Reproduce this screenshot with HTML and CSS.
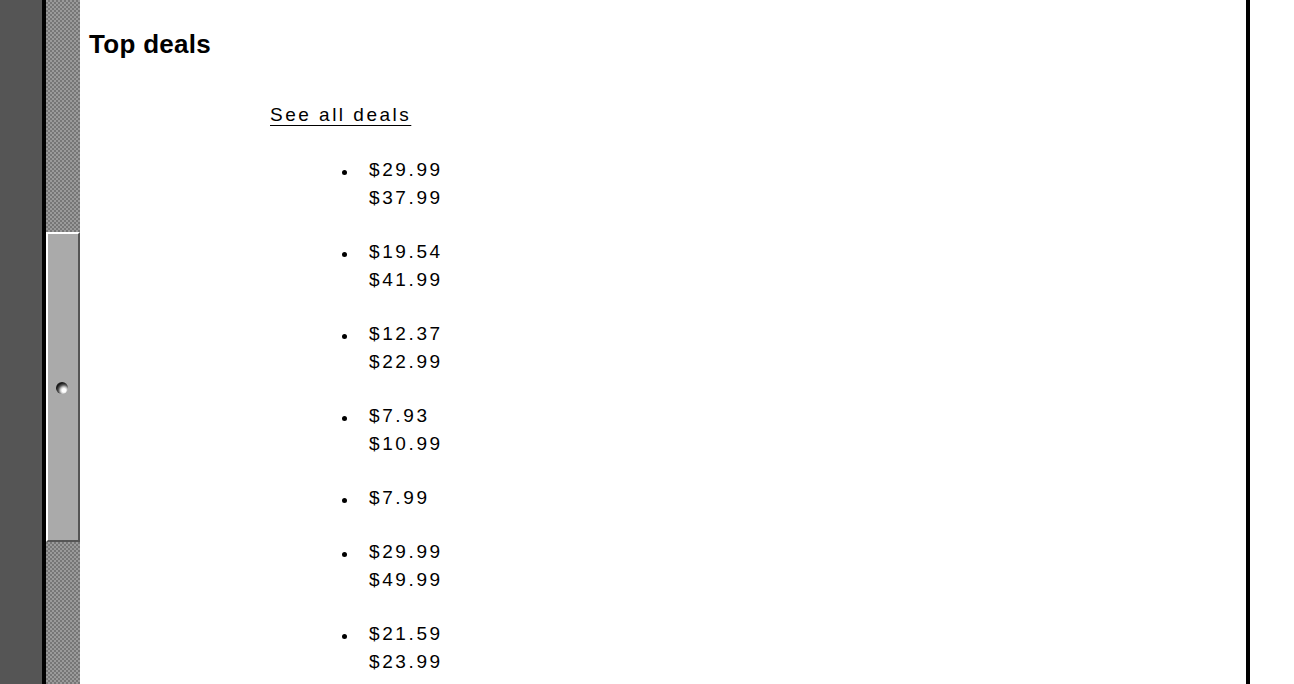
FILE: index.html
```html
<!DOCTYPE html>
<html>
<head>
<meta charset="utf-8">
<link rel="stylesheet" href="styles.css">
</head>
<body>
<div class="screen">
  <div class="side"></div>
  <div class="scrollbar">
    <div class="thumb"><span class="dimple"></span></div>
  </div>
  <main class="content">
    <h2 class="title">Top deals</h2>
    <div class="deals">
      <a class="see-all" href="#">See all deals</a>
      <ul class="deal-list">
        <li><div>$29.99</div><div>$37.99</div></li>
        <li><div>$19.54</div><div>$41.99</div></li>
        <li><div>$12.37</div><div>$22.99</div></li>
        <li><div>$7.93</div><div>$10.99</div></li>
        <li><div>$7.99</div></li>
        <li><div>$29.99</div><div>$49.99</div></li>
        <li><div>$21.59</div><div>$23.99</div></li>
      </ul>
    </div>
  </main>
  <div class="rest"></div>
</div>
</body>
</html>
```
FILE: styles.css
```css
html, body {
  margin: 0;
  padding: 0;
  background: #fff;
}
.screen {
  display: flex;
  width: 1294px;
  height: 684px;
  overflow: hidden;
  font-family: "Liberation Sans", Arial, sans-serif;
  color: #000;
}
.side {
  width: 42px;
  flex: none;
  background: #555555;
  border-right: 4px solid #000;
}
.scrollbar {
  width: 34px;
  flex: none;
  display: flex;
  flex-direction: column;
  background-color: #888;
  background-image: repeating-conic-gradient(#767676 0 25%, #9a9a9a 0 50%);
  background-size: 4px 4px;
}
.thumb {
  margin-top: 232px;
  height: 306px;
  background: #aaaaaa;
  border-top: 2px solid #fff;
  border-left: 2px solid #fff;
  border-right: 2px solid #555;
  border-bottom: 2px solid #555;
  display: flex;
  align-items: center;
  justify-content: center;
}
.dimple {
  width: 12px;
  height: 12px;
  border-radius: 50%;
  margin-left: -2px;
  margin-top: 2px;
  background: radial-gradient(circle at 66% 70%, #ffffff 0 16%, #c8c8c8 30%, #555 48%, #151515 66%, #2a2a2a 85%, #777 100%);
}
.content {
  flex: none;
  width: 1157px;
  border-right: 4px solid #000;
  padding: 30px 0 0 9px;
}
.title {
  margin: 0;
  font-size: 26px;
  line-height: 28px;
  font-weight: bold;
  letter-spacing: 0.3px;
}
.deals {
  margin: 43px 0 0 181px;
  font-size: 19px;
  line-height: 28px;
  letter-spacing: 2.6px;
}
.see-all {
  color: #000;
  letter-spacing: 2.5px;
  text-decoration: underline;
  text-underline-offset: 4px;
}
.deal-list {
  list-style: none;
  margin: 27px 0 0 0;
  padding: 0 0 0 99px;
}
.deal-list li {
  margin-bottom: 26px;
}
.deal-list li::before {
  content: "";
  float: left;
  width: 5px;
  height: 5px;
  border-radius: 50%;
  background: #000;
  margin: 14px 0 0 -27px;
}
.rest {
  flex: 1;
  background: #fff;
}
```
